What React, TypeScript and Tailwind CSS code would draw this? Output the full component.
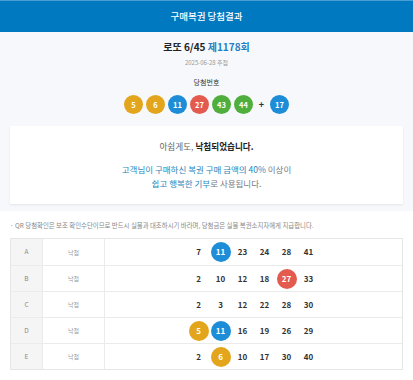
import React from 'react';

type Color = 'yellow' | 'blue' | 'red' | 'green';

const ballBg: Record<Color, string> = {
  yellow: 'bg-[#e3a51b]',
  blue: 'bg-[#1c8dd6]',
  red: 'bg-[#e35b4e]',
  green: 'bg-[#4fae3c]',
};

function colorOf(n: number): Color {
  if (n <= 10) return 'yellow';
  if (n <= 20) return 'blue';
  if (n <= 30) return 'red';
  return 'green';
}

const winning = [5, 6, 11, 27, 43, 44];
const bonus = 17;

const rows = [
  { label: 'A', nums: [7, 11, 23, 24, 28, 41] },
  { label: 'B', nums: [2, 10, 12, 18, 27, 33] },
  { label: 'C', nums: [2, 3, 12, 22, 28, 30] },
  { label: 'D', nums: [5, 11, 16, 19, 26, 29] },
  { label: 'E', nums: [2, 6, 10, 17, 30, 40] },
];

function Ball({ n }: { n: number }) {
  return (
    <span
      className={`flex h-[19px] w-[19px] items-center justify-center rounded-full text-[7.5px] font-bold text-white ${ballBg[colorOf(n)]}`}
    >
      {n}
    </span>
  );
}

export default function App() {
  return (
    <div className="w-[413px] bg-white font-['Noto_Sans_CJK_KR','Noto_Sans',sans-serif] text-[#333]">
      {/* Header */}
      <header className="flex h-[32px] items-center justify-center border-t border-[#4a9fd2] bg-[#0079c1] text-[9.5px] font-medium text-white">
        구매복권 당첨결과
      </header>

      {/* Draw info */}
      <section className="bg-[#f6f8fc] px-[10px] pb-[7px] pt-[5px]">
        <h1 className="text-center text-[10px] font-bold leading-[20px] text-[#222]">
          로또 6/45 <span className="text-[#1f7fc0]">제1178회</span>
        </h1>
        <p className="text-center text-[6px] leading-[12px] text-[#999]">2025-06-28 추첨</p>
        <p className="mt-[6px] text-center text-[7px] leading-[14px] text-[#333]">당첨번호</p>
        <div className="mt-[6px] flex items-center justify-center gap-[3px]">
          {winning.map((n) => (
            <Ball key={n} n={n} />
          ))}
          <span className="w-[11px] text-center text-[9px] font-bold leading-none text-[#333]">+</span>
          <Ball n={bonus} />
        </div>

        {/* Result card */}
        <div className="mt-[12px] h-[78px] bg-white pt-[13px] text-center shadow-[0_1px_2px_rgba(0,0,0,0.08)]">
          <p className="text-[8.6px] leading-[14px] text-[#666]">
            아쉽게도, <span className="font-bold text-[#222]">낙첨되었습니다.</span>
          </p>
          <p className="mt-[9px] text-[8.5px] leading-[14px] text-[#777]">
            <span className="text-[#2587bb]">고객님이 구매하신 복권 구매 금액의 40%</span> 이상이
            <br />
            <span className="text-[#2587bb]">쉽고 행복한 기부</span>로 사용됩니다.
          </p>
        </div>
      </section>

      {/* Notice */}
      <p className="px-[10px] pt-[10px] text-[6.4px] leading-[10px] text-[#888]">
        · QR 당첨확인은 보조 확인수단이므로 반드시 실물과 대조하시기 바라며, 당첨금은 실물 복권소지자에게 지급합니다.
      </p>

      {/* Purchased games */}
      <div className="mx-[10px] mt-[7px] border border-[#e6e6e6]">
        {rows.map((row, i) => (
          <div
            key={row.label}
            className={`flex h-[26px] ${i > 0 ? 'border-t border-[#ebebeb]' : ''}`}
          >
            <div className="flex w-[32px] items-center justify-center border-r border-[#ebebeb] bg-[#f5f5f5] text-[6.5px] text-[#888]">
              {row.label}
            </div>
            <div className="flex w-[62px] items-center justify-center border-r border-[#ebebeb] text-[6px] text-[#999]">
              낙첨
            </div>
            <div className="flex flex-1 items-center justify-center gap-[2px]">
              {row.nums.map((n) =>
                winning.includes(n) ? (
                  <span
                    key={n}
                    className={`flex h-[20px] w-[20px] items-center justify-center rounded-full text-[8px] font-bold text-white ${ballBg[colorOf(n)]}`}
                  >
                    {n}
                  </span>
                ) : (
                  <span
                    key={n}
                    className="flex h-[20px] w-[20px] items-center justify-center text-[8px] font-semibold text-[#333]"
                  >
                    {n}
                  </span>
                ),
              )}
            </div>
          </div>
        ))}
      </div>
      <div className="h-[14px]" />
    </div>
  );
}
